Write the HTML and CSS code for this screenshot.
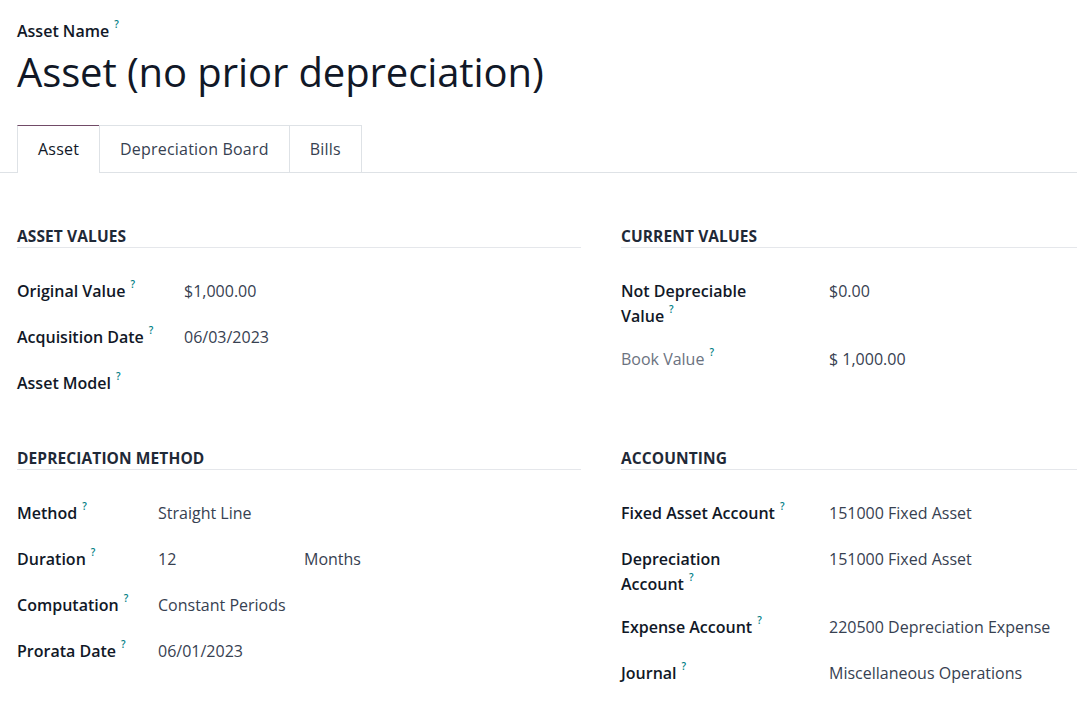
FILE: index.html
```html
<!DOCTYPE html>
<html>
<head>
<meta charset="utf-8">
<link rel="stylesheet" href="styles.css">
</head>
<body>
<div class="sheet">
  <div class="title-block">
    <div class="name-label">Asset Name<sup class="help">?</sup></div>
    <h1 class="title">Asset (no prior depreciation)</h1>
  </div>
  <div class="tabs">
    <div class="tab active">Asset</div>
    <div class="tab">Depreciation Board</div>
    <div class="tab">Bills</div>
  </div>
  <div class="grid">
    <section class="group">
      <h2 class="group-title">Asset Values</h2>
      <div class="rows rows-a">
        <div class="label">Original Value<sup class="help">?</sup></div><div class="value">$1,000.00</div>
        <div class="label">Acquisition Date<sup class="help">?</sup></div><div class="value">06/03/2023</div>
        <div class="label">Asset Model<sup class="help">?</sup></div><div class="value"></div>
      </div>
    </section>
    <section class="group">
      <h2 class="group-title">Current Values</h2>
      <div class="rows rows-r">
        <div class="label">Not Depreciable Value<sup class="help">?</sup></div><div class="value">$0.00</div>
        <div class="label muted">Book Value<sup class="help">?</sup></div><div class="value">$ 1,000.00</div>
      </div>
    </section>
    <section class="group lower">
      <h2 class="group-title">Depreciation Method</h2>
      <div class="rows rows-b">
        <div class="label">Method<sup class="help">?</sup></div><div class="value">Straight Line</div>
        <div class="label">Duration<sup class="help">?</sup></div><div class="value split"><span class="num">12</span><span>Months</span></div>
        <div class="label">Computation<sup class="help">?</sup></div><div class="value">Constant Periods</div>
        <div class="label">Prorata Date<sup class="help">?</sup></div><div class="value">06/01/2023</div>
      </div>
    </section>
    <section class="group lower">
      <h2 class="group-title">Accounting</h2>
      <div class="rows rows-r">
        <div class="label">Fixed Asset Account<sup class="help">?</sup></div><div class="value">151000 Fixed Asset</div>
        <div class="label">Depreciation Account<sup class="help">?</sup></div><div class="value">151000 Fixed Asset</div>
        <div class="label">Expense Account<sup class="help">?</sup></div><div class="value">220500 Depreciation Expense</div>
        <div class="label">Journal<sup class="help">?</sup></div><div class="value">Miscellaneous Operations</div>
      </div>
    </section>
  </div>
</div>
</body>
</html>
```
FILE: styles.css
```css
html, body {
  margin: 0;
  padding: 0;
  background: #ffffff;
  overflow: hidden;
}
body {
  font-family: "Open Sans", "Noto Sans", sans-serif;
  font-size: 16px;
  color: #374151;
  width: 1077px;
}
.sheet {
  padding-top: 19px;
}
.title-block {
  padding-left: 17px;
}
.name-label {
  font-weight: 600;
  color: #111827;
  font-size: 16px;
  line-height: 24px;
}
.help {
  color: #017e84;
  font-size: 10px;
  font-weight: 600;
  margin-left: 5px;
  vertical-align: top;
  line-height: 10px;
}
.title {
  margin: 3px 0 0 0;
  font-size: 40px;
  font-weight: 400;
  color: #111827;
  line-height: 52px;
  letter-spacing: -0.1px;
}
.tabs {
  display: flex;
  margin-top: 27px;
  padding-left: 17px;
  border-bottom: 1px solid #dee2e6;
}
.tab {
  padding: 0 20px;
  height: 46px;
  line-height: 46px;
  border: 1px solid #dee2e6;
  border-bottom: none;
  margin-left: -1px;
  color: #374151;
  font-size: 16px;
  letter-spacing: 0.2px;
}
.tab:first-child {
  margin-left: 0;
}
.tab.active {
  border-top: 1px solid #714b67;
  color: #111827;
  background: #fff;
  margin-bottom: -1px;
  height: 47px;
}
.grid {
  display: grid;
  grid-template-columns: 564px 564px;
  column-gap: 40px;
  padding: 51px 0 0 17px;
}
.group.lower {
  margin-top: 47px;
}
.group-title {
  margin: 0;
  font-size: 15.5px;
  font-weight: 700;
  text-transform: uppercase;
  color: #1f2937;
  line-height: 18px;
  padding-top: 3px;
  padding-bottom: 2px;
  border-bottom: 1px solid #e5e7eb;
  letter-spacing: 0.1px;
}
.rows {
  display: grid;
  row-gap: 18px;
  margin-top: 31px;
  line-height: 25px;
}
.rows > div {
  min-height: 28px;
}
.rows-a {
  grid-template-columns: 167px 1fr;
}
.rows-b {
  grid-template-columns: 141px 1fr;
}
.rows-r {
  grid-template-columns: 208px 1fr;
}
.rows-r .label {
  max-width: 168px;
}
.label {
  font-weight: 600;
  color: #111827;
}
.label.muted {
  font-weight: 400;
  color: #6b7280;
}
.value {
  color: #374151;
}
.split {
  display: flex;
}
.split .num {
  width: 146px;
}
```
